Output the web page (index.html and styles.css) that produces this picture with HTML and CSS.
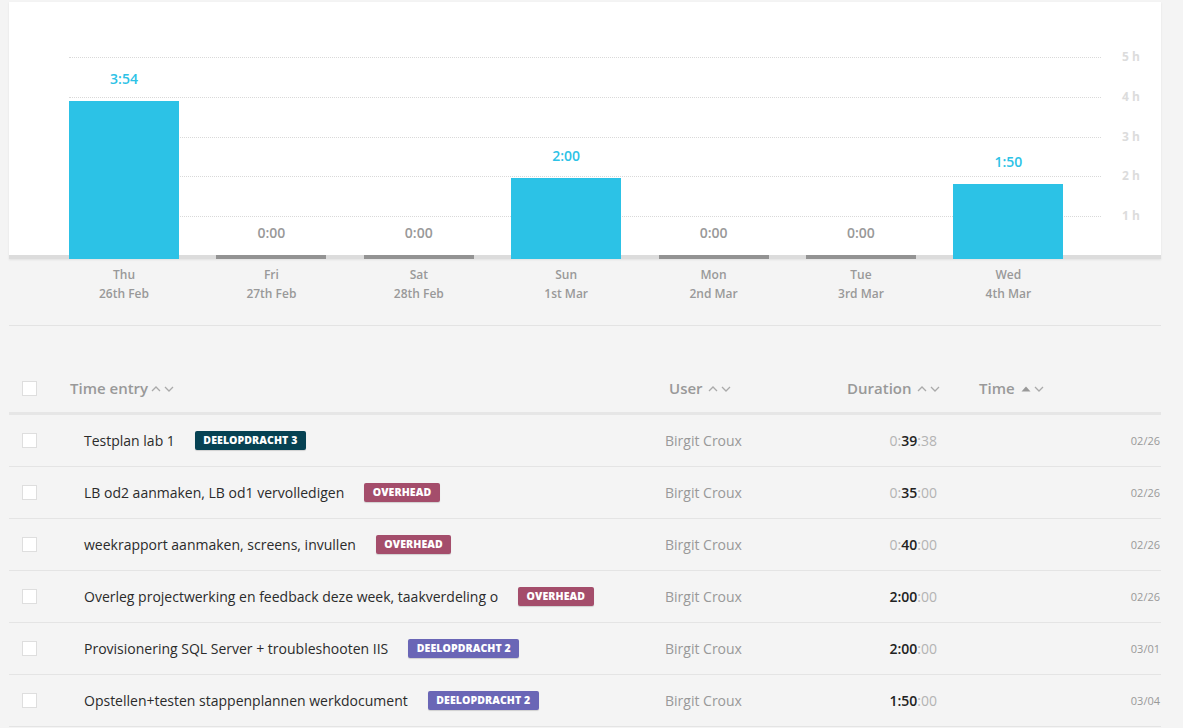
FILE: index.html
```html
<!DOCTYPE html>
<html>
<head>
<meta charset="utf-8">
<link rel="stylesheet" href="styles.css">
</head>
<body>
<div class="page">
  <section class="chart-card">
    <div class="grid-layer">
      <div class="grid-row"><span class="grid-line"></span><span class="axis-label">5 h</span></div>
      <div class="grid-row"><span class="grid-line"></span><span class="axis-label">4 h</span></div>
      <div class="grid-row"><span class="grid-line"></span><span class="axis-label">3 h</span></div>
      <div class="grid-row"><span class="grid-line"></span><span class="axis-label">2 h</span></div>
      <div class="grid-row"><span class="grid-line"></span><span class="axis-label">1 h</span></div>
    </div>
    <div class="bars-layer">
      <div class="col"><div class="bar-wrap"><span class="value active">3:54</span><div class="bar active" style="height:158px"></div></div></div>
      <div class="col"><div class="bar-wrap"><span class="value">0:00</span><div class="bar zero"></div></div></div>
      <div class="col"><div class="bar-wrap"><span class="value">0:00</span><div class="bar zero"></div></div></div>
      <div class="col"><div class="bar-wrap"><span class="value active">2:00</span><div class="bar active" style="height:81px"></div></div></div>
      <div class="col"><div class="bar-wrap"><span class="value">0:00</span><div class="bar zero"></div></div></div>
      <div class="col"><div class="bar-wrap"><span class="value">0:00</span><div class="bar zero"></div></div></div>
      <div class="col"><div class="bar-wrap"><span class="value active">1:50</span><div class="bar active" style="height:75px"></div></div></div>
    </div>
  </section>

  <div class="day-labels">
    <div class="day"><span>Thu</span><span>26th Feb</span></div>
    <div class="day"><span>Fri</span><span>27th Feb</span></div>
    <div class="day"><span>Sat</span><span>28th Feb</span></div>
    <div class="day"><span>Sun</span><span>1st Mar</span></div>
    <div class="day"><span>Mon</span><span>2nd Mar</span></div>
    <div class="day"><span>Tue</span><span>3rd Mar</span></div>
    <div class="day"><span>Wed</span><span>4th Mar</span></div>
  </div>

  <hr class="separator">

  <div class="table">
    <div class="thead">
      <div class="cell-chk"><span class="checkbox"></span></div>
      <div class="th">Time entry<svg class="sort tight" viewBox="0 0 24 10"><path d="M1 7 L5 3 L9 7" /><path d="M14 3 L18 7 L22 3" /></svg></div>
      <div class="th">User <svg class="sort" viewBox="0 0 24 10"><path d="M1 7 L5 3 L9 7" /><path d="M14 3 L18 7 L22 3" /></svg></div>
      <div class="th">Duration <svg class="sort" viewBox="0 0 24 10"><path d="M1 7 L5 3 L9 7" /><path d="M14 3 L18 7 L22 3" /></svg></div>
      <div class="th">Time <svg class="sort" viewBox="0 0 24 10"><path class="filled" d="M0.5 7.5 L5 2.5 L9.5 7.5 Z" /><path d="M14 3 L18 7 L22 3" /></svg></div>
    </div>

    <div class="row">
      <div class="cell-chk"><span class="checkbox"></span></div>
      <div class="desc">Testplan lab 1<span class="tag t-d3">DEELOPDRACHT 3</span></div>
      <div class="user">Birgit Croux</div>
      <div class="dur"><span class="dim">0:</span><b>39</b><span class="dim">:38</span></div>
      <div class="date">02/26</div>
    </div>
    <div class="row">
      <div class="cell-chk"><span class="checkbox"></span></div>
      <div class="desc">LB od2 aanmaken, LB od1 vervolledigen<span class="tag t-oh">OVERHEAD</span></div>
      <div class="user">Birgit Croux</div>
      <div class="dur"><span class="dim">0:</span><b>35</b><span class="dim">:00</span></div>
      <div class="date">02/26</div>
    </div>
    <div class="row">
      <div class="cell-chk"><span class="checkbox"></span></div>
      <div class="desc">weekrapport aanmaken, screens, invullen<span class="tag t-oh">OVERHEAD</span></div>
      <div class="user">Birgit Croux</div>
      <div class="dur"><span class="dim">0:</span><b>40</b><span class="dim">:00</span></div>
      <div class="date">02/26</div>
    </div>
    <div class="row">
      <div class="cell-chk"><span class="checkbox"></span></div>
      <div class="desc">Overleg projectwerking en feedback deze week, taakverdeling o<span class="tag t-oh">OVERHEAD</span></div>
      <div class="user">Birgit Croux</div>
      <div class="dur"><b>2:00</b><span class="dim">:00</span></div>
      <div class="date">02/26</div>
    </div>
    <div class="row">
      <div class="cell-chk"><span class="checkbox"></span></div>
      <div class="desc">Provisionering SQL Server + troubleshooten IIS<span class="tag t-d2">DEELOPDRACHT 2</span></div>
      <div class="user">Birgit Croux</div>
      <div class="dur"><b>2:00</b><span class="dim">:00</span></div>
      <div class="date">03/01</div>
    </div>
    <div class="row">
      <div class="cell-chk"><span class="checkbox"></span></div>
      <div class="desc">Opstellen+testen stappenplannen werkdocument<span class="tag t-d2">DEELOPDRACHT 2</span></div>
      <div class="user">Birgit Croux</div>
      <div class="dur"><b>1:50</b><span class="dim">:00</span></div>
      <div class="date">03/04</div>
    </div>
  </div>
</div>
</body>
</html>
```

FILE: styles.css
```css
* { box-sizing: border-box; }

html, body {
  margin: 0;
  padding: 0;
  background: #f4f4f4;
  font-family: "Open Sans", "Liberation Sans", sans-serif;
  color: #333;
  overflow: hidden;
}

.page {
  width: 1152px;
  margin-left: 9px;
  padding-top: 2px;
}

/* ---------- chart ---------- */
.chart-card {
  display: grid;
  height: 257px;
  background: linear-gradient(to top, #dcdcdc 4px, #ffffff 4px);
  box-shadow: 0 1px 2px rgba(0, 0, 0, 0.08);
}

.grid-layer,
.bars-layer {
  grid-area: 1 / 1;
}

.grid-layer {
  display: flex;
  flex-direction: column;
  padding-top: 55px;
}

.grid-row {
  display: flex;
  height: 39.8px;
}

.grid-line {
  flex: 0 0 1032px;
  margin-left: 60px;
  height: 0;
  border-top: 1px dotted #d9d9d9;
}

.axis-label {
  margin-left: 21px;
  margin-top: -9px;
  height: 18px;
  line-height: 18px;
  font-size: 12px;
  font-weight: 700;
  color: #dcdcdc;
}

.bars-layer {
  display: flex;
  align-items: flex-end;
  padding-left: 60px;
}

.col {
  flex: 0 0 147.4px;
}

.bar-wrap {
  width: 110px;
  display: flex;
  flex-direction: column;
  align-items: center;
}

.value {
  font-size: 14px;
  font-weight: 600;
  line-height: 20px;
  margin-bottom: 12px;
  color: #999;
}

.value.active {
  color: #2dc2e6;
}

.bar {
  width: 110px;
}

.bar.active {
  background: #2cc2e6;
}

.bar.zero {
  height: 4px;
  background: #939393;
}

.day-labels {
  display: flex;
  padding-left: 60px;
  margin-top: 6px;
}

.day {
  flex: 0 0 147.4px;
  display: flex;
  flex-direction: column;
  align-items: center;
  width: 110px;
  max-width: 110px;
  margin-right: 37.4px;
  font-size: 12px;
  font-weight: 600;
  line-height: 19px;
  color: #999;
}

.separator {
  border: 0;
  border-top: 1px solid #e3e3e3;
  margin: 22px 0 0 0;
  height: 0;
}

/* ---------- table ---------- */
.table {
  margin-top: 46px;
}

.thead {
  display: grid;
  grid-template-columns: 61px 599px 178px 132px 1fr;
  align-items: center;
  height: 43px;
  padding-bottom: 8px;
  border-bottom: 3px solid #e6e6e6;
}

.th {
  display: flex;
  align-items: center;
  font-size: 15px;
  font-weight: 600;
  color: #999;
  white-space: pre;
}

.sort {
  width: 24px;
  height: 10px;
  margin-left: 2px;
  margin-top: 2px;
  fill: none;
  stroke: #aaa;
  stroke-width: 1.3;
}

.sort.tight {
  margin-left: 3px;
}

.sort .filled {
  fill: #999;
  stroke: none;
}

.cell-chk {
  display: flex;
  align-items: center;
  padding-left: 13px;
}

.checkbox {
  display: block;
  width: 15px;
  height: 15px;
  background: #fff;
  border: 1px solid #dedede;
}

.row {
  display: grid;
  grid-template-columns: 75px 581px 180px 92px 223px 1fr;
  align-items: center;
  height: 52px;
  border-bottom: 1px solid #e4e4e4;
}

.desc {
  display: flex;
  align-items: center;
  font-size: 14px;
  color: #2b2b2b;
  white-space: nowrap;
}

.tag {
  display: inline-block;
  margin-left: 20px;
  height: 19px;
  line-height: 19px;
  padding: 0 8.5px;
  border-radius: 2px;
  font-size: 10.5px;
  font-weight: 800;
  letter-spacing: 0.1px;
  color: #fff;
  box-shadow: 0 1px 1px rgba(0, 0, 0, 0.15);
}

.t-d3 { background: #064253; }
.t-oh { background: #a44d6b; }
.t-d2 { background: #6a66b6; }

.user {
  font-size: 14px;
  color: #999;
}

.dur {
  text-align: right;
  font-size: 14px;
  color: #222;
}

.dur b {
  font-weight: 600;
}

.dur .dim {
  color: #b3b3b3;
}

.date {
  text-align: right;
  font-size: 11px;
  color: #999;
}
```
